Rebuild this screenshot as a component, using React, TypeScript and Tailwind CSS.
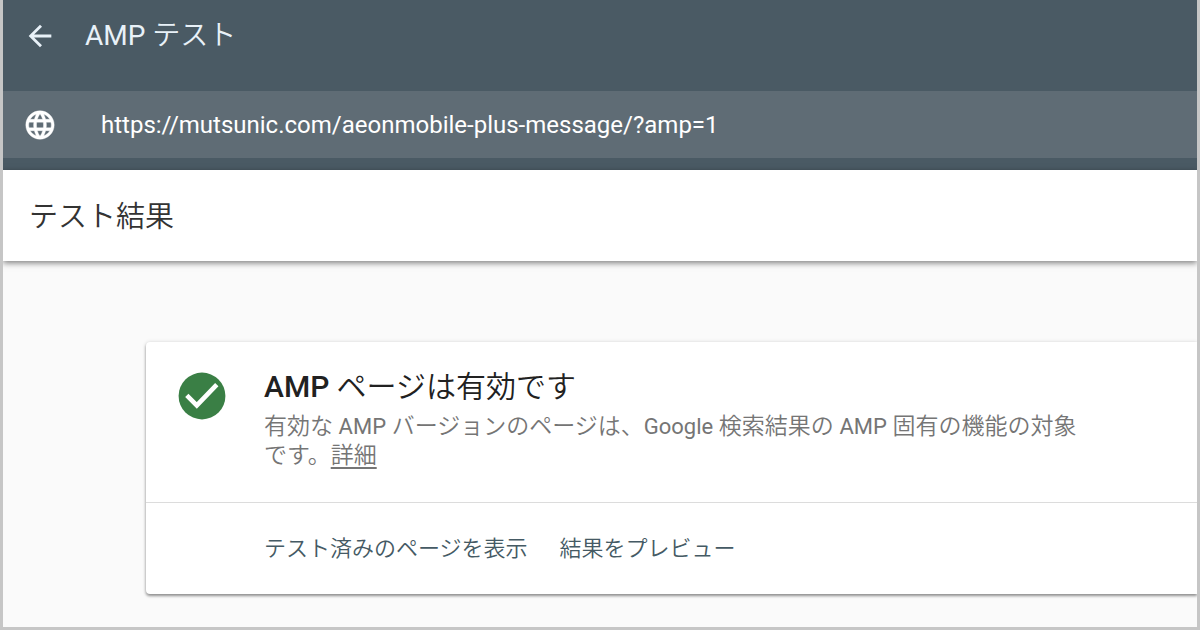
import type React from "react"

interface IconProps {
  className?: string
}

const BackIcon: React.FC<IconProps> = ({ className }) => (
  <svg viewBox="0 0 24 24" fill="currentColor" className={className} aria-hidden="true">
    <path d="M20 11H7.83l5.59-5.59L12 4l-8 8 8 8 1.41-1.41L7.83 13H20v-2z" />
  </svg>
)

const GlobeIcon: React.FC<IconProps> = ({ className }) => (
  <svg viewBox="0 0 24 24" fill="currentColor" className={className} aria-hidden="true">
    <path
      stroke="currentColor"
      strokeWidth="0.3"
      d="M11.99 2C6.47 2 2 6.48 2 12s4.47 10 9.99 10C17.52 22 22 17.52 22 12S17.52 2 11.99 2zm6.93 6h-2.95c-.32-1.25-.78-2.45-1.38-3.56 1.84.63 3.37 1.91 4.33 3.56zM12 4.04c.83 1.2 1.48 2.53 1.91 3.96h-3.82c.43-1.43 1.08-2.76 1.91-3.96zM4.26 14C4.1 13.36 4 12.69 4 12s.1-1.36.26-2h3.38c-.08.66-.14 1.32-.14 2s.06 1.34.14 2H4.26zm.82 2h2.95c.32 1.25.78 2.45 1.38 3.56-1.84-.63-3.37-1.9-4.33-3.56zm2.95-8H5.08c.96-1.66 2.49-2.93 4.33-3.56C8.81 5.55 8.35 6.75 8.03 8zM12 19.96c-.83-1.2-1.48-2.53-1.91-3.96h3.82c-.43 1.43-1.08 2.76-1.91 3.96zM14.34 14H9.66c-.09-.66-.16-1.32-.16-2s.07-1.35.16-2h4.68c.09.65.16 1.32.16 2s-.07 1.34-.16 2zm.25 5.56c.6-1.11 1.06-2.31 1.38-3.56h2.95c-.96 1.65-2.49 2.93-4.33 3.56zM16.36 14c.08-.66.14-1.32.14-2s-.06-1.34-.14-2h3.38c.16.64.26 1.31.26 2s-.1 1.36-.26 2h-3.38z"
    />
  </svg>
)

const CheckIcon: React.FC<IconProps> = ({ className }) => (
  <svg viewBox="0 0 24 24" className={className} aria-hidden="true">
    <circle cx="12" cy="12" r="11.7" fill="#3a7f45" />
    <path d="M4.4 11.7l5 5 10-10.4" fill="none" stroke="#fff" strokeWidth="2.3" />
  </svg>
)

const Header = () => (
  <header className="bg-[#4a5a64] pb-3 text-[#e8f1f8]">
    <div className="flex h-[91px] items-start gap-7 px-5 pt-4">
      <button type="button" aria-label="戻る" className="flex h-10 items-center">
        <BackIcon className="size-[34px]" />
      </button>
      <h1 className="text-[28px] leading-10 font-[350]">
        <span className="font-normal">AMP</span> テスト
      </h1>
    </div>
    <div className="flex h-[67px] items-center gap-[44px] bg-[#5f6c75] px-5 text-white">
      <label htmlFor="url" aria-label="URL">
        <GlobeIcon className="size-[34px]" />
      </label>
      <input
        id="url"
        type="url"
        defaultValue="https://mutsunic.com/aeonmobile-plus-message/?amp=1"
        className="min-w-0 flex-1 bg-transparent text-2xl outline-none"
      />
    </div>
  </header>
)

const ResultCard = () => (
  <section className="rounded-l-sm bg-white shadow-[0_2px_3px_rgba(0,0,0,0.4),0_0_4px_rgba(0,0,0,0.12)]">
    <div className="flex gap-[38px] border-b border-[#dcdcdc] pt-6 pr-28 pb-8 pl-8">
      <CheckIcon className="mt-[6px] size-12 shrink-0" />
      <div>
        <h3 className="mb-1 text-[30px] leading-[42px] font-[350] text-[#212121]">
          <span className="font-medium">AMP</span> ページは有効です
        </h3>
        <p className="text-[23px] leading-[29px] font-[350] text-[#757575]">
          有効な <span className="text-[22px] font-normal">AMP</span> バージョンのページは、
          <span className="text-[22px] font-normal">Google</span> 検索結果の{" "}
          <span className="text-[22px] font-normal">AMP</span> 固有の機能の対象です。
          <a href="#details" className="underline underline-offset-4">
            詳細
          </a>
        </p>
      </div>
    </div>
    <div className="flex h-[91px] items-center gap-8 pl-[118px] text-[22px] font-[350] text-[#455a64]">
      <button type="button">テスト済みのページを表示</button>
      <button type="button">結果をプレビュー</button>
    </div>
  </section>
)

export default function App() {
  return (
    <div
      lang="ja"
      className="flex min-h-screen flex-col overflow-hidden border-x-3 border-b-3 border-[#c6c6c6] bg-[#fafafa] font-[Roboto,'Noto_Sans_CJK_JP',sans-serif]"
    >
      <Header />
      <h2 className="bg-white px-[26px] pt-[26px] pb-[22px] text-[29px] leading-[43px] font-[350] text-[#333] shadow-[0_2px_6px_rgba(0,0,0,0.5)]">
        テスト結果
      </h2>
      <main className="pt-[81px] pl-[143px]">
        <ResultCard />
      </main>
    </div>
  )
}
